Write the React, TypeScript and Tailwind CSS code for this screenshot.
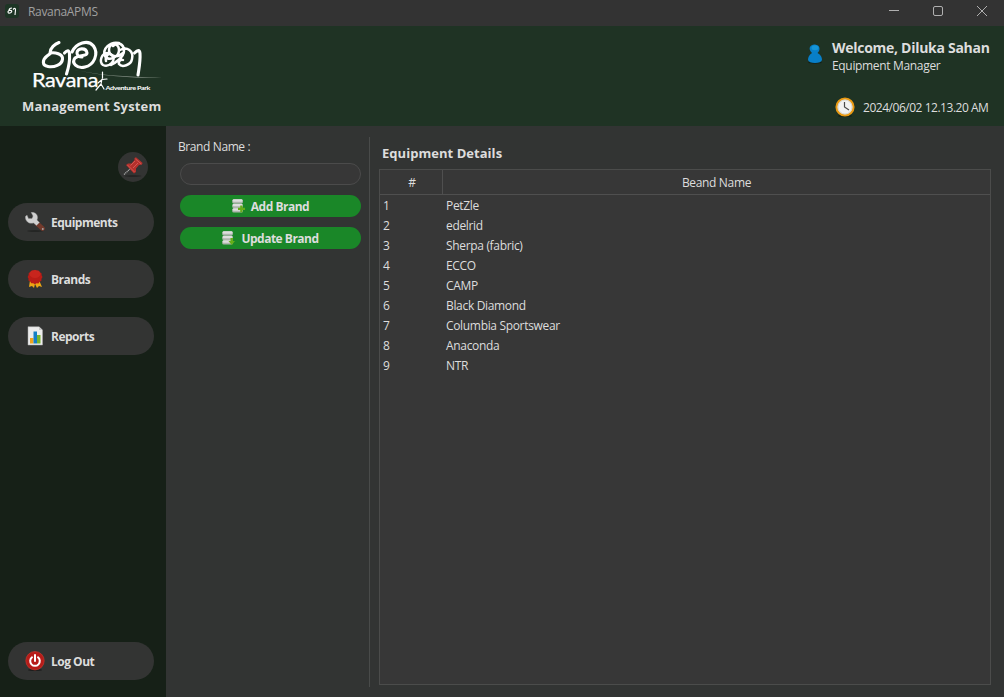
import type { ReactNode } from 'react';

const brands = ['PetZle', 'edelrid', 'Sherpa (fabric)', 'ECCO', 'CAMP', 'Black Diamond', 'Columbia Sportswear', 'Anaconda', 'NTR'];

function Logo() {
  return (
    <svg className="ml-[28px] mt-[10px] block h-[60px] w-[136px]" viewBox="28 36 136 60" fill="none">
      <g stroke="#fff" strokeWidth="3.1" strokeLinecap="round" strokeLinejoin="round">
        <path d="M59 42.5C55 44 50 48 50 53C55 52 63 54 62.5 59C62 65 54 67.5 48 66.5C42 65.5 42 60 47 56L51 53" />
        <path d="M64.5 53Q69 48 69.5 54C70 61 68.5 68 66.5 74" />
        <path d="M72 52C76 43 88 39 93.5 46C99 54 94 65 85 67C77 69 71 63 75 58C80 54 87 57 87 53C86 47 77 48 77 53C77 55 79 57 82 57" />
        <g strokeWidth="2.5">
          <path d="M119 43C110 41 102 49 105 56C109 62 119 57 119 50C119 42 109 43 109 50C109 57 118 58 123 53" />
          <path d="M108 53C101 53 99 62 103 65C109 68 117 60 112 55C108 52 105 57 106 61" />
          <path d="M113 46C118 41 124 44 124 51C124 57 115 63 111 65M120 50C127 46 134 51 132 59C131 65 122 68 119 64C118 61 121 59 123 60" />
        </g>
        <path d="M134.5 53Q139.5 48 140 53.5C140.5 61 139 68 138 75" />
      </g>
      <path d="M67 68C93 75 126 77 162 77.5C130 79 94 75 67 68Z" fill="#7d897e" />
      <g stroke="#fff" strokeLinecap="round"><path d="M102.5 72V78M98 83L102 79.5L107 79M102 79L101 84L96 90M101 84L104 89" strokeWidth="1.2" /></g>
      <text x="32" y="87" fontFamily="Lato, sans-serif" fontSize="18.5" textLength="66" lengthAdjust="spacingAndGlyphs" fill="#fff" stroke="#fff" strokeWidth=".25">Ravana</text>
      <text x="105.5" y="90" fontFamily="Lato, sans-serif" fontWeight="700" fontSize="6" textLength="44.5" lengthAdjust="spacingAndGlyphs" fill="#fff">Adventure Park</text>
    </svg>
  );
}

function Wrench() {
  return <svg className="size-5" viewBox="0 0 20 20"><ellipse cx="10" cy="19" rx="8" ry=".8" fill="#202120" /><path d="M12 11.5L17.5 16.5" stroke="#733a2c" strokeWidth="4.6" strokeLinecap="round" /><path d="M6 .2C11-.5 14 4 12 8L14.5 10.5L11.5 13.5L8.5 11C4 12.5 0 9 .3 4.5L2 3L3.5 6.5L7 6.5L8 4Z" fill="#d0d0d0" stroke="#888" strokeWidth=".4" /><circle cx="17.8" cy="17" r=".9" fill="#aaa" /></svg>;
}
function Rosette() {
  return <svg className="size-5" viewBox="0 0 20 20"><path d="M5 11L4 18L7 17L9 19L10 15L12 19L14 17L17 18L14 11Z" fill="#eda514" /><path d="M10 .7l1.7 1 2-.2 1 1.7 1.8 1 .1 2 .9 1.8-1 1.8-.1 2-1.8 1-1.1 1.6-2-.1-1.6.9-1.7-1-2 .1-1-1.7-1.8-1 .1-2-.9-1.7 1-1.8.1-2 1.8-1 1-1.7 2 .1z" fill="#b91c16" /><ellipse cx="10" cy="5" rx="5.5" ry="4" fill="#cf2921" opacity=".7" /></svg>;
}
function Report() {
  return <svg className="size-5" viewBox="0 0 20 20"><path d="M3 .7H14L17.5 4V19H3Z" fill="#ececec" stroke="#aaa" strokeWidth=".5" /><path d="M14 .7V4H17.5" fill="#c8c8c8" /><path d="M5 12h3.5v5.5H5z" fill="#efa31c" /><path d="M8.5 5.5h3.5v12H8.5z" fill="#147fc6" /><path d="M12 9h3.5v8.5H12z" fill="#76b52c" /></svg>;
}
function Power() {
  return <svg className="size-5" viewBox="0 0 20 20"><ellipse cx="10" cy="19" rx="7" ry="1" fill="#1d1e1d" /><circle cx="10" cy="9.7" r="9.2" fill="#b71c19" stroke="#c9382e" strokeWidth=".7" /><path d="M7 6.3A4.8 4.8 0 1 0 13 6.3M10 4V10" fill="none" stroke="#fff" strokeWidth="2" strokeLinecap="round" /></svg>;
}
function Pin() {
  return <svg className="size-5" viewBox="0 0 20 20"><ellipse cx="10" cy="19" rx="8.5" ry=".8" fill="#202120" /><path d="M1 17.5L7 12" stroke="#aaa" strokeWidth="1.2" strokeDasharray="1.2 .6" /><path d="M3 8L5 6.5L8.5 6.5L11.5 3L11.5 1L13 .3L19.7 6L18.5 7.8L16 8L13 11.5L13 15L11 16.5Z" fill="#b5302c" /><path d="M4.5 8L11.5 15M12.5 2L18.3 7M7.5 8.5L12 4M10 11L15 6" stroke="#d45c57" strokeWidth=".9" /></svg>;
}
function Database({ update = false }: { update?: boolean }) {
  return (
    <svg className="h-[14px] w-[13px]" viewBox="0 0 13 14">
      {[0, 4.5, 9].map(y => <g key={y}><rect x=".2" y={y + 0.3} width="10.7" height="4.2" rx="1.6" fill="#aeb5ad" /><rect x=".7" y={y + 0.3} width="9.8" height="2.4" rx="1.2" fill="#dedede" /></g>)}
      <path d={update ? 'M8.5 7h2.5v3h2l-3.3 4L6.5 10h2z' : 'M8.2 6.5h2.3v2.3H13V11h-2.5v2.3H8.2V11H6V8.8h2.2z'} fill="#65ae19" />
    </svg>
  );
}

function NavItem({ icon, label }: { icon: ReactNode; label: string }) {
  return <button className="flex h-[38px] w-[146px] shrink-0 items-center rounded-full bg-[#333433] pl-[17px] text-left text-[12px] font-bold tracking-[-0.5px]"><span className="mr-[6px]">{icon}</span><span className="pt-0.5">{label}</span></button>;
}

export default function App() {
  return (
    <div className="flex h-[697px] w-[1004px] flex-col overflow-hidden bg-[#323433] font-['Open_Sans','Noto_Sans',sans-serif] text-[12px] leading-4 tracking-[-0.33px] text-[#dddddd]">
      <header className="flex h-[26px] shrink-0 items-center bg-[#333333]">
        <svg className="mb-1 ml-[5px] size-[14px]" viewBox="0 0 14 14"><rect width="14" height="14" rx="3" fill="#1d3525" /><path d="M7 4Q4 4 4 6.5C7 6 7.5 7 6 8.5C3 10 2 8 4 6.5M8 5.5Q10.5 3 10.5 6L10 11" fill="none" stroke="#fff" strokeWidth="1.1" /></svg>
        <span className="ml-[9px] mb-0.5 text-[#a0a0a0]">RavanaAPMS</span>
        <svg className="mb-1 ml-auto mr-[16px] h-3 w-[100px]" viewBox="0 0 100 12" fill="none" stroke="#b0b0b0"><path d="M1 5.5H11M89 1L99 11M99 1L89 11" /><rect x="45.5" y="1.5" width="9" height="9" rx="1.5" /></svg>
      </header>
      <section className="flex h-[100px] shrink-0 justify-between bg-[#1f3324]">
        <div className="w-[180px]"><Logo /><h1 className="ml-[22px] mt-0.5 whitespace-nowrap text-[13px] font-bold tracking-[0.16px]">Management System</h1></div>
        <div className="flex w-[200px] flex-col pt-[13px]">
          <div className="flex">
            <svg className="ml-[3px] mt-[5px] h-[20px] w-4" viewBox="0 0 16 20"><ellipse cx="8" cy="18.5" rx="7" ry="1.2" fill="#152218" /><path d="M5 9C0 4 4 0 8 .5C13 1 14 6 10.5 9C14 11 15 13 15 16Q14 19 8 19Q2 19 1 16C1 13 2 11 5 9Z" fill="#087fc8" /><ellipse cx="8" cy="3.7" rx="3.5" ry="2.5" fill="#1695d8" /></svg>
            <div className="ml-[9px] whitespace-nowrap"><h2 className="text-[14px] font-bold leading-[18px] tracking-[-0.28px]">Welcome, Diluka Sahan</h2><p className="mt-px">Equipment Manager</p></div>
          </div>
          <div className="mt-[23px] flex items-center">
            <svg className="ml-[31px] size-5" viewBox="0 0 20 20"><ellipse cx="10" cy="19" rx="7" ry="1" fill="#152218" /><circle cx="10" cy="10" r="8.6" fill="#f2f2f2" stroke="#e99a13" strokeWidth="2" /><circle cx="10" cy="10" r="7" fill="none" stroke="#bdb8aa" strokeWidth=".5" /><path d="M9.5 5V10L14 13" fill="none" stroke="#4b4b4b" strokeWidth="1.2" /></svg>
            <span className="ml-[8px] whitespace-nowrap pt-0.5 tracking-[-0.47px]">2024/06/02 12.13.20 AM</span>
          </div>
        </div>
      </section>
      <main className="flex min-h-0 flex-1">
        <nav className="flex w-[166px] shrink-0 flex-col bg-[#162017] px-2 pb-[17px] pt-[26px]">
          <button className="mb-[21px] ml-[110px] flex size-[30px] shrink-0 items-center justify-center rounded-full bg-[#333433]"><Pin /></button>
          <div className="flex flex-col gap-[19px]"><NavItem icon={<Wrench />} label="Equipments" /><NavItem icon={<Rosette />} label="Brands" /><NavItem icon={<Report />} label="Reports" /></div>
          <div className="mt-auto"><NavItem icon={<Power />} label="Log Out" /></div>
        </nav>
        <aside className="mb-[10px] mt-[11px] flex w-[204px] shrink-0 flex-col border-r border-[#494b4a] pl-[14px] pr-[8px]">
          <label className="-ml-[2px] mt-[2px] tracking-[-0.4px]" htmlFor="brand">Brand Name :</label>
          <input id="brand" className="mt-[8px] h-[22px] w-[181px] rounded-full border border-[#4b4b4b] bg-[#373737] px-3 outline-none" />
          <button className="mt-[10px] flex h-[22px] w-[181px] items-center justify-center gap-[6px] rounded-full bg-[#1a8728] font-bold tracking-[-0.5px]"><Database /><span className="pt-0.5">Add Brand</span></button>
          <button className="mt-[10px] flex h-[22px] w-[181px] items-center justify-center gap-[6px] rounded-full bg-[#1a8728] font-bold tracking-[-0.5px]"><Database update /><span className="pt-0.5">Update Brand</span></button>
        </aside>
        <section className="flex flex-1 flex-col pb-3 pl-[9px] pr-[13px] pt-[18px]">
          <h2 className="ml-[3px] text-[13px] font-bold leading-[18px] tracking-[0.04px]">Equipment Details</h2>
          <div className="mt-[7px] flex-1 border border-[#4b4c4b] bg-[#373737]">
            <div className="grid h-[25px] grid-cols-[63px_1fr] border-b border-[#4f4f4f] text-center leading-[25px]"><span className="border-r border-[#4f4f4f] pl-0.5">#</span><span>Beand Name</span></div>
            {brands.map((brand, i) => <div key={brand} className="grid h-5 grid-cols-[63px_1fr] items-center pt-0.5"><span className="pl-[3px]">{i + 1}</span><span className="pl-[3px]">{brand}</span></div>)}
          </div>
        </section>
      </main>
    </div>
  );
}
